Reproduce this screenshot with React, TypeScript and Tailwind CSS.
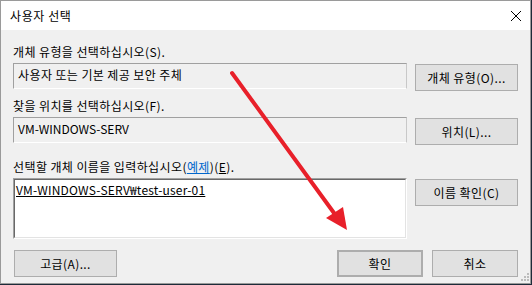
import React from "react";

const font = { fontFamily: '"Noto Sans CJK KR", "Noto Sans", sans-serif' };

function Btn({ children, className = "" }: { children: React.ReactNode; className?: string }) {
  return (
    <div
      className={`flex items-center justify-center h-[27px] bg-[#e1e1e1] border border-[#adadad] text-[12px] tracking-[0.4px] text-black ${className}`}
    >
      {children}
    </div>
  );
}

function Field({ children, className = "" }: { children: React.ReactNode; className?: string }) {
  return (
    <div className="h-[26px] border border-[#a0a0a0] border-b-white border-r-[#c8c8c8] bg-[#f0f0f0]">
      <div className={`h-full flex items-center pl-[4px] pb-[2px] text-[12px] text-black ${className}`}>{children}</div>
    </div>
  );
}

export default function App() {
  return (
    <div className="relative w-[532px] h-[285px] bg-[#1d2b39] overflow-hidden" style={font}>
      <div className="w-[531px] h-[284px] border border-[#9a9a9a] flex flex-col">
        {/* title bar */}
        <div className="h-[29px] bg-white flex items-center justify-between pl-[9px] pr-[9px]">
          <span className="text-[12px] tracking-[0.6px] text-black">사용자 선택</span>
          <svg width="10" height="10" viewBox="0 0 10 10">
            <path d="M0 0L10 10M10 0L0 10" stroke="#000" strokeWidth="1" />
          </svg>
        </div>

        <div className="flex-1 bg-[#f0f0f0] pl-[12px] pr-[12px] pt-[14px] relative">
          {/* section 1 */}
          <div className="flex">
            <div className="w-[394px]">
              <div className="h-[16px] leading-[16px] text-[12px] tracking-[0.4px] text-black">개체 유형을 선택하십시오(S).</div>
              <div className="mt-[3px]">
                <Field className="tracking-[0.4px]">사용자 또는 기본 제공 보안 주체</Field>
              </div>
            </div>
            <Btn className="ml-[8px] mt-[20px] w-[103px]">개체 유형(O)...</Btn>
          </div>

          {/* section 2 */}
          <div className="flex mt-[7px]">
            <div className="w-[394px]">
              <div className="h-[16px] leading-[16px] text-[12px] tracking-[0.4px] text-black">찾을 위치를 선택하십시오(F).</div>
              <div className="mt-[3px]">
                <Field>VM-WINDOWS-SERV</Field>
              </div>
            </div>
            <Btn className="ml-[8px] mt-[20px] w-[103px]">위치(L)...</Btn>
          </div>

          {/* section 3 */}
          <div className="flex mt-[14px]">
            <div className="w-[394px]">
              <div className="h-[16px] leading-[16px] text-[12px] tracking-[0.4px] text-black">
                선택할 개체 이름을 입력하십시오(
                <span className="text-[#0066cc] underline">예제</span>)(<span className="underline">E</span>).
              </div>
              <div className="mt-[3px] h-[61px] border border-t-[#a0a0a0] border-l-[#a0a0a0] border-r-white border-b-white">
                <div className="h-full bg-white border border-t-[#696969] border-l-[#696969] border-r-[#e3e3e3] border-b-[#e3e3e3] pl-[1px] pt-[3px] text-[12px] leading-[14px] tracking-[0.2px]">
                  <span className="text-black underline">VM-WINDOWS-SERV₩test-user-01</span>
                </div>
              </div>
            </div>
            <Btn className="ml-[8px] mt-[20px] w-[103px]">이름 확인(C)</Btn>
          </div>

          {/* bottom buttons */}
          <div className="flex mt-[11px]">
            <Btn className="ml-[1px] w-[103px]">고급(A)...</Btn>
            <div className="flex-1" />
            <Btn className="w-[86px] border-2 border-[#0078d7]">확인</Btn>
            <Btn className="ml-[9px] w-[86px]">취소</Btn>
          </div>

          {/* resize grip */}
          <div className="absolute right-[1px] bottom-[2px] grid grid-cols-3 gap-[1px]">
            <span className="w-[2px] h-[2px]" />
            <span className="w-[2px] h-[2px]" />
            <span className="w-[2px] h-[2px] bg-[#bcbcbc]" />
            <span className="w-[2px] h-[2px]" />
            <span className="w-[2px] h-[2px] bg-[#bcbcbc]" />
            <span className="w-[2px] h-[2px] bg-[#bcbcbc]" />
            <span className="w-[2px] h-[2px] bg-[#bcbcbc]" />
            <span className="w-[2px] h-[2px] bg-[#bcbcbc]" />
            <span className="w-[2px] h-[2px] bg-[#bcbcbc]" />
          </div>
        </div>
      </div>

      {/* red arrow annotation */}
      <svg className="absolute left-0 top-0 pointer-events-none" width="532" height="285" viewBox="0 0 532 285">
        <line x1="232" y1="73" x2="334" y2="213" stroke="#e8202a" strokeWidth="4" strokeLinecap="round" />
        <polygon points="347,230 326,218 343,207" fill="#e8202a" />
      </svg>
    </div>
  );
}
